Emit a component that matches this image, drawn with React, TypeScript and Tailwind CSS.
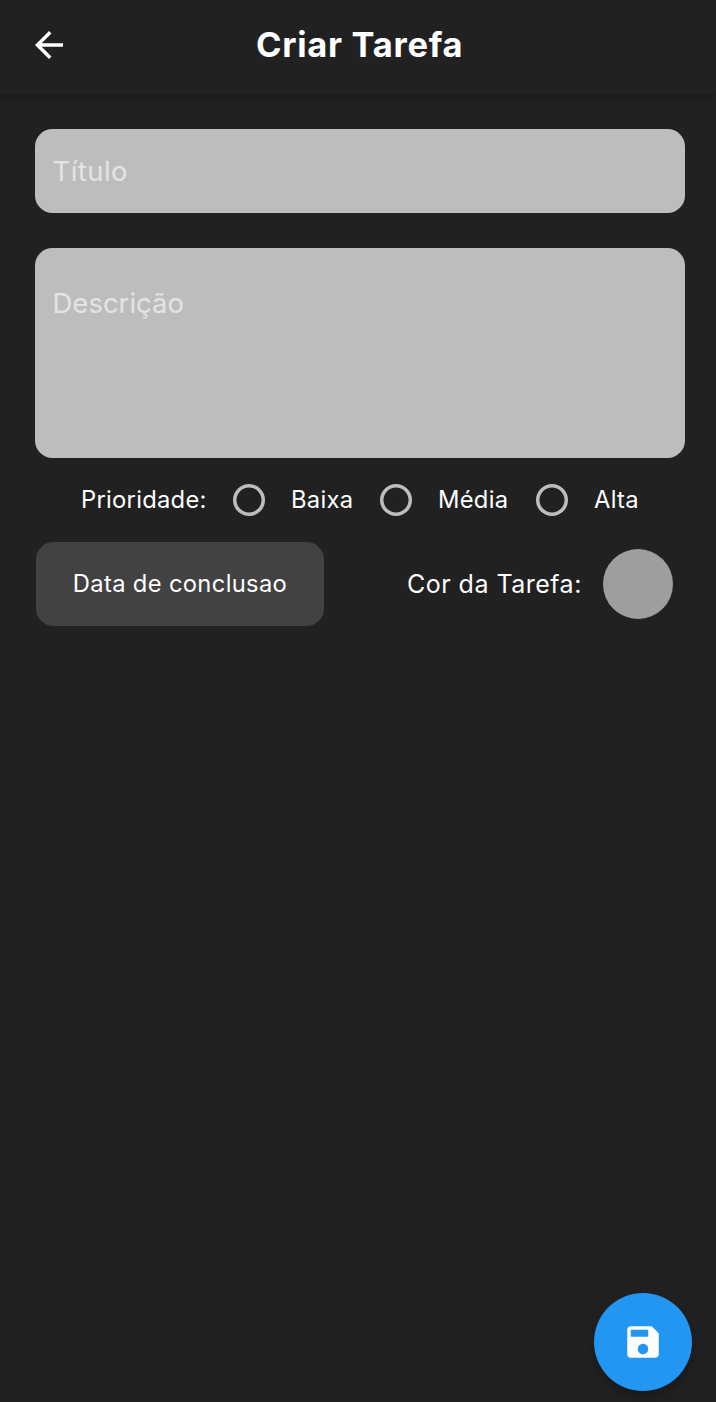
import React from "react";

const priorities = [
  { label: "Baixa", box: "w-[147px]" },
  { label: "Média", box: "w-[156px]" },
  { label: "Alta", box: "w-[120px]" },
];

export default function App() {
  return (
    <div className="relative flex h-[1402px] w-[716px] flex-col overflow-hidden bg-[#212121] font-['Inter',sans-serif] text-white">
      <header className="flex h-[94px] shrink-0 items-start pt-6 shadow-[0_3px_7px_rgba(0,0,0,0.22)]">
        <button aria-label="Voltar" className="ml-7 h-[42px] w-[42px]">
          <svg viewBox="0 0 24 24" className="h-[42px] w-[42px]" fill="currentColor">
            <path d="M20 11H7.83l5.59-5.59L12 4l-8 8 8 8 1.41-1.41L7.83 13H20v-2z" />
          </svg>
        </button>
        <h1 className="ml-[186px] whitespace-nowrap text-[34.5px] font-bold leading-[42px] tracking-[0.7px]">Criar Tarefa</h1>
      </header>

      <main className="flex flex-col px-[35px] pt-[35px]">
        <input
          aria-label="Título"
          placeholder="Título"
          className="h-[84px] w-[650px] rounded-[17.5px] bg-[#bdbdbd] px-[17.5px] pb-px text-[27.5px] tracking-[0.45px] text-[#212121] outline-none placeholder:text-[#e4e4e4]"
        />
        <textarea
          aria-label="Descrição"
          placeholder="Descrição"
          className="mt-[35px] h-[210px] w-[650px] resize-none rounded-[17.5px] bg-[#bdbdbd] px-[17.5px] pt-[38px] text-[27.5px] leading-[34px] tracking-normal text-[#212121] outline-none placeholder:text-[#e4e4e4]"
        />

        <div className="flex h-[84px] items-center text-[23.75px] tracking-[0.27px]">
          <span className="ml-[46px] w-[152px]">Prioridade:</span>
          {priorities.map(({ label, box }) => (
            <label key={label} className={`flex items-center ${box}`}>
              <input type="radio" name="prioridade" className="h-8 w-8 shrink-0 appearance-none rounded-full shadow-[inset_0_0_0_3.5px_#bdbdbd]" />
              <span className="ml-[26px]">{label}</span>
            </label>
          ))}
        </div>

        <div className="flex items-center">
          <button className="ml-px h-[84px] w-[288px] rounded-[17.5px] bg-[#424242] text-[23.75px] tracking-[0.33px]">Data de conclusao</button>
          <span className="ml-[83px] w-[196px] pt-px text-[25px] tracking-[0.48px]">Cor da Tarefa:</span>
          <button aria-label="Cor da Tarefa" className="size-[70px] rounded-full bg-[#9e9e9e]" />
        </div>
      </main>

      <button aria-label="Salvar" className="absolute left-[594px] top-[1293px] flex size-[98px] items-center justify-center rounded-full bg-[#2196f3] shadow-[0_6px_12px_rgba(0,0,0,0.25)]">
        <svg viewBox="0 0 24 24" className="size-[42px]" fill="currentColor">
          <path d="M17 3H5c-1.11 0-2 .9-2 2v14c0 1.1.89 2 2 2h14c1.1 0 2-.9 2-2V7l-4-4zm-5 16c-1.66 0-3-1.34-3-3s1.34-3 3-3 3 1.34 3 3-1.34 3-3 3zm3-10H5V5h10v4z" />
        </svg>
      </button>
    </div>
  );
}
